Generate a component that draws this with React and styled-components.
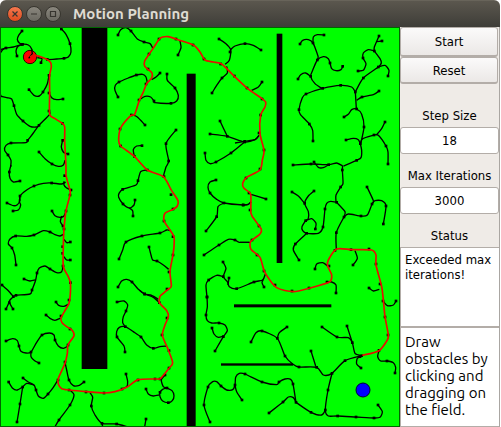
import React, { useState } from "react";
import styled, { createGlobalStyle } from "styled-components";

const GlobalStyle = createGlobalStyle`
  * { box-sizing: border-box; }
  body { margin: 0; background: #fff; }
`;

const Window = styled.main`
  margin-right: 1px;
  border-radius: 6px 6px 0 0;
  overflow: hidden;
  background: #efebe7;
  font: 13px/15px "DejaVu Sans Condensed", "DejaVu Sans", sans-serif;
  color: #000;
`;

const TitleBar = styled.header`
  display: flex;
  align-items: center;
  height: 27px;
  padding-left: 7px;
  gap: 3px;
  background: linear-gradient(#5b574e, #3e3d38);
  border-top: 1px solid #68645a;
`;

const WindowButton = styled.button`
  display: flex;
  width: 16px;
  height: 16px;
  padding: 0;
  align-items: center;
  justify-content: center;
  border: 1px solid #38362f;
  border-radius: 50%;
  background: ${(p) => (p.$close ? "linear-gradient(#f4784f, #df4b1e)" : "linear-gradient(#8a877e, #6b6961)")};
  color: #37352f;
  svg { display: block; }
`;

const Title = styled.h1`
  margin: 0 0 0 9px;
  font: bold 15px/20px "Ubuntu", "Noto Sans", sans-serif;
  color: #dfdbd2;
`;

const Body = styled.div`
  display: grid;
  grid-template-columns: minmax(0, 4fr) minmax(0, 1fr);
`;

const Field = styled.svg`
  display: block;
  width: 100%;
  background: #00ff00;
`;

const Panel = styled.aside`
  display: flex;
  flex-direction: column;
  border-right: 1px solid #aaa6a2;
`;

const Action = styled.button`
  height: ${(p) => p.$height};
  margin-right: 1px;
  padding: 0;
  border: 1px solid #b3ada8;
  border-bottom-width: 2px;
  border-radius: 3px;
  background: linear-gradient(#fbfafa, #ebe8e6);
  font: inherit;
  color: inherit;
`;

const Label = styled.label`
  padding: ${(p) => p.$top} 0 4px;
  text-align: center;
  white-space: nowrap;
`;

const NumberBox = styled.input`
  width: 100%;
  height: 27px;
  padding: 0;
  border: 1px solid #b3ada8;
  border-radius: 3px;
  background: #fff;
  font: inherit;
  color: inherit;
  text-align: center;
`;

const StatusBox = styled.textarea`
  display: block;
  width: 100%;
  height: 81px;
  padding: 4px 0 0 4px;
  border: 1px solid #b3ada8;
  border-bottom-width: 2px;
  border-right: 0;
  background: #fff;
  font: inherit;
  color: inherit;
  resize: none;
  overflow: hidden;
  outline: none;
`;

const Help = styled.p`
  flex: 1;
  margin: 0;
  padding: 5px 0 0 4px;
  border-left: 1px solid #b3ada8;
  border-bottom: 1px solid #b3ada8;
  background: #fff;
  font: 15px/17px "Ubuntu", "Noto Sans", sans-serif;
`;

/* The field is drawn on a 1200-unit grid, in regions. Each branch lists the
   points that its curve goes through; an asterisk marks a vertex of the tree. */
const regions = [
  {
    at: [0, 0],
    tree: [
      "66,12* 56,25 52,37 58,48 67,52*",
      "0,80 8,68 18,63* 40,60 67,52* 85,54 95,66 97,80 90,90",
      "0,68 18,63",
      "67,52 54,58 48,72 51,87*",
      "184,6* 198,22 210,50* 213,75 205,90 192,94* 170,96 145,98",
      "123,107* 126,95 112,92",
      "147,145* 142,170 129,195* 118,207 102,205 87,188*",
      "147,198* 155,212 170,218 189,216*",
      "0,207* 20,212 35,216 42,236* 50,262 69,282* 90,298 110,300 117,295*",
      "147,252* 149,262 117,295 100,318 83,340* 78,347 33,348* 18,355 14,370 24,384* 33,400 32,420",
      "117,375* 135,395 156,411* 175,418 190,414 195,400",
      "204,381* 197,379", "188,340* 184,360 190,375 197,379", "187,289*", "142,97*",
    ],
  },
  {
    at: [0, 399],
    tree: [
      "33,15 28,36* 30,55 40,66 60,63*",
      "194,47*", "213,90* 200,84 192,75 192,64",
      "197,66 185,72 155,69* 130,70 102,78* 80,90 60,108* 60,122 52,134 40,137 21,129*",
      "60,108 58,125 62,135 55,150 39,153*",
      "156,153* 165,167 180,172 192,168 198,153*",
      "185,168 181,185 189,198*",
      "192,222 180,228 165,224 150,216* 130,212 102,225* 80,229 47,228* 30,237 25,252 36,264* 44,285 48,315*",
      "211,246* 200,248 192,238", "211,300* 200,300 192,290",
      "189,318* 185,335 170,338 150,327* 135,318 118,324 111,339* 107,360 96,390* 90,402 48,406* 40,410",
      "72,357* 90,363 105,360", "6,375* 25,392 40,410*", "0,372 6,375",
      "192,207*", "188,260*", "188,280*", "210,105*", "211,368*",
    ],
  },
  {
    at: [0, 789],
    tree: [
      "40,20 30,30 25,42 18,57*", "28,38* 39,57*",
      "168,36* 176,46 192,49 207,42", "138,75* 150,85 165,91 183,84",
      "204,168 190,175 175,168 165,150* 162,135 148,129 126,135* 110,157 93,186* 78,189 62,183 57,168* 52,152 38,146 18,153*",
      "93,186 93,200 104,212 117,219*",
      "195,216* 200,240 207,270* 220,287 238,286 252,276*",
      "26,276* 38,295 52,300 68,291*", "68,291 60,342* 51,396*",
      "69,264* 85,276 102,285 108,300* 115,318 130,325 144,312* 160,292 174,270*",
      "68,291 80,280 102,285",
      "210,300 222,315 210,345* 177,390* 165,410",
      "270,308 278,322 274,348* 285,375 306,400* 350,402* 380,410", "306,400 308,410",
      "438,387* 434,410",
      "378,252* 383,275 380,290 366,297*",
      "351,36* 372,33 383,45 378,63* 370,80 368,98 376,110",
      "375,186* 372,168 351,141* 350,125 358,112 376,110* 400,125 423,141* 440,165 460,175* 480,170 500,168",
      "418,0 434,12* 460,22 478,38*",
      "438,297* 445,312 460,318 478,315",
      "495,255* 484,270 490,290 501,294* 516,302 522,317 517,332 505,338* 488,333 480,320 480,307* 488,298 501,294",
      "207,30*", "183,78*", "210,117*", "204,165*", "207,300*", "258,306*", "312,309*", "414,270*",
      "465,267*", "480,267*", "507,234*", "507,182*", "486,135*", "501,84*",
    ],
  },
  {
    at: [300, 0],
    tree: [
      "54,24* 62,8 78,2 93,12* 112,36 132,45* 150,50 158,63",
      "240,42 243,62 234,84*",
      "54,210* 45,190 46,175 57,165* 85,153 109,144* 128,142 138,150 142,168",
      "180,138* 168,150 155,158",
      "201,141* 202,160 225,183* 235,205 230,222 213,229* 165,227 162,222* 152,210 135,208 122,216",
      "98,264 112,270 135,294*", "126,356* 110,357 100,368 103,388*",
      "228,309* 198,350* 206,402* 198,420 190,448",
      "357,36* 375,48 392,68 388,100 375,112", "390,75* 392,68",
      "483,69* 460,55 435,50* 405,57 392,68",
      "380,118 382,138 366,153* 350,175 336,198*",
      "360,282* 382,328*", "330,321* 382,328 434,345* 465,338 477,325",
      "434,345 393,378* 348,405* 330,410 318,400 315,378*",
      "177,36*", "228,36*", "279,54*", "312,96*", "362,111*", "403,147*", "147,81*", "144,126*",
      "138,171*", "117,219*", "94,264*", "60,306*", "62,357*",
    ],
  },
  {
    at: [300, 399],
    tree: [
      "142,30* 122,35 114,62* 108,75 68,88* 57,100 56,112 69,132* 88,144 102,135 105,120*",
      "88,144 98,152 99,168*",
      "57,297* 68,270 78,246* 126,228* 180,219* 200,210 212,212",
      "147,261* 153,285 158,300 171,303* 190,315 206,328",
      "54,381* 65,363 80,358 96,366* 115,388 134,402* 155,406 175,418",
      "348,60* 330,66 324,82 330,99* 350,118 372,129* 430,135* 445,133 453,125",
      "372,129 354,140 350,170* 318,213*",
      "312,285* 357,255* 385,238 405,240* 418,247 450,247",
      "369,306* 378,325 370,350* 382,365 388,380 410,386* 462,366* 488,360 496,342",
      "387,354* 384,375", "370,350 350,346 326,360* 318,375 321,411*",
      "192,50*", "213,104*", "219,147*", "192,183*", "219,230*", "219,285*", "207,336*", "201,387*",
    ],
  },
  {
    at: [720, 0],
    tree: [
      "66,165* 55,180 35,190",
      "180,51* 188,40 205,38 219,48* 228,70 235,90", "219,48 220,30 232,23 252,24*",
      "308,118* 303,128 288,131 275,125 270,108* 265,95 250,89 232,99* 218,130 212,148* 225,170 245,184",
      "235,90 232,99", "174,156* 182,143 197,138 212,148",
      "219,342* 218,310 208,291* 181,262 177,248* 187,212 198,201* 248,184* 302,175* 335,180 346,195*",
      "346,195 370,153* 415,120* 424,108 420,95 403,72*", "417,27* 403,60 403,72", "426,42* 410,44",
      "403,72 385,68 370,78 369,93* 378,110 370,130 354,132*",
      "415,120 435,115 447,130 444,147*", "346,195 349,245", "417,192* 400,203 366,210* 350,220",
      "312,270* 325,262 335,248 350,246* 365,262 372,300* 362,350",
      "318,339* 340,334 355,338 361,350*", "361,350 368,335 402,324*", "435,285* 425,305 409,324",
      "402,324 415,325 438,357* 444,375 444,411*",
      "361,350 365,370 363,392 350,400* 310,417", "14,343*",
      "-15,348 14,343 45,338 57,325", "0,51 0,51",
      "21,183*", "66,216*", "62,264*", "57,318*", "72,369*",
    ],
  },
  {
    at: [720, 399],
    tree: [
      "159,15* 213,12* 266,14* 290,9 308,18", "222,6* 235,22 250,23 266,14",
      "308,18 307,30* 309,70 302,81* 288,105 288,125",
      "156,96* 175,108 194,130*", "222,93* 205,108 194,130 205,155 205,175 197,182*",
      "197,182 215,176 228,190 226,207*",
      "197,182 186,200 188,212 200,220* 235,220 249,201* 255,147* 260,130 272,124 290,127*",
      "290,127 315,155 312,171*", "312,171 325,162 363,168* 382,165 396,132*",
      "381,81* 400,122 396,132", "396,132 405,122 425,122 438,138* 430,192*",
      "312,171 289,218* 289,270", "200,220 166,252* 160,270 177,300*",
      "225,327* 230,312 248,308 263,318", "345,272 352,295 339,315*",
      "288,399* 288,375 275,366 260,366", "387,384* 400,393 418,388",
      "78,117* 33,103", "9,135* 25,133 33,125", "0,247 28,247",
      "72,381* 66,368 70,358",
      "60,27*", "18,54*", "27,99*", "30,150*", "57,198*", "36,240*", "51,285*", "72,333*", "105,375*",
      "156,393*", "207,384*", "261,366*", "267,318*", "285,271*", "333,269*", "387,267*", "408,312*", "420,372*",
    ],
  },
  {
    at: [600, 789],
    tree: [
      "21,21* 22,50 18,75* 22,92 35,99 57,99* 75,105 82,122 70,140* 45,183*", "36,114* 42,132 55,142 70,138",
      "153,156* 168,128 186,123* 232,145* 255,198* 278,222 297,231* 350,232* 370,255 396,250* 435,212* 485,197*",
      "261,111* 238,128 232,145", "333,183* 347,228",
      "366,111* 411,141* 445,143 457,158* 465,190 485,197", "441,108* 457,158",
      "485,197 472,205 470,222 483,234*", "588,33* 580,45 562,47 549,33*",
      "537,182 533,200 542,213 561,213* 580,218 587,232 585,249*",
      "396,250 384,300* 376,360* 385,378 413,378* 468,381* 522,384* 540,382 547,365 534,345*",
      "376,360 365,375 333,367* 288,337*",
      "207,369* 249,336* 265,321 280,323 288,337",
      "288,337 279,282* 272,268 255,267 237,276* 230,284 186,276* 135,252* 118,250 107,262 105,285* 98,299 80,300 63,288* 50,275 38,275 24,291* 12,345* 30,396*",
      "105,285 110,305 126,330*", "555,81*", "564,135*", "537,181*", "480,200*",
    ],
  },
];

const routes = [
  { at: [0, 0], line: "90,90 100,85 118,88 140,97 152,107 154,120 149,145 149,200 149,262 165,275 187,289 194,300 194,340 196,380 198,420 198,444 204,469 210,489 210,504 198,552 192,606 190,659 190,719 204,747 211,767 211,800 207,829 196,849 183,873 186,887 200,899 216,909 222,926 204,954 202,979 195,1009 175,1054 175,1071 185,1085 210,1089 260,1094 312,1098 345,1094 380,1081 415,1058 470,1056 482,1054 507,1024 518,1007 505,969 500,957 487,924 495,894 505,869 500,851 478,827 480,807" },
  { at: [300, 399], line: "180,408 204,388 214,378 210,335 218,290 222,260 222,230 210,210 192,182 195,160 220,148 232,138 234,122 215,92 190,50 142,30 103,-11 62,-42 56,-59 62,-96 92,-133 104,-137 118,-179 130,-204 140,-229 155,-246 156,-261 145,-271 134,-282 134,-297 145,-314 160,-336 178,-363 188,-369 205,-370 230,-362 280,-345 300,-324 315,-300 340,-294 365,-288 400,-254 442,-215 485,-185 497,-174 495,-159 482,-134 480,-79 492,-29 487,0" },
  { at: [720, 399], line: "67,0 60,30 20,52 8,70 12,85 32,103 33,160 48,185 64,208 60,222 32,245 33,268 60,292 75,338 110,383 160,395 210,384 268,366 275,345 263,318 265,300 290,267 335,269 395,270 408,285 408,315 425,380 430,420 435,470 445,525 442,540 417,572 367,586" },
];

const parse = (line) =>
  line.split(" ").map((item) => {
    const [x, y] = item.replace("*", "").split(",").map(Number);
    return { x, y, vertex: item.endsWith("*") };
  });

const curve = (points) =>
  points.slice(1).reduce((d, end, i) => {
    const start = points[i];
    const before = points[i - 1] || start;
    const after = points[i + 2] || end;
    const c1 = `${start.x + (end.x - before.x) / 8},${start.y + (end.y - before.y) / 8}`;
    const c2 = `${end.x - (after.x - start.x) / 8},${end.y - (after.y - start.y) / 8}`;
    return `${d} C${c1} ${c2} ${end.x},${end.y}`;
  }, `M${points[0].x},${points[0].y}`);

const shift = ([x, y]) => `translate(${x} ${y})`;

function PlanningField() {
  return (
    <Field viewBox="0 0 1200 1200" role="img" aria-label="Planning field">
      <g fill="none" stroke="#000" strokeWidth="4">
        {regions.map((region) => (
          <g key={region.at.join()} transform={shift(region.at)}>
            {region.tree.map((line) => <path key={line} d={curve(parse(line))} />)}
          </g>
        ))}
      </g>
      <g>
        <rect x="245" y="0" width="77" height="1026" />
        <rect x="560" y="140" width="27" height="1060" />
        <rect x="830" y="20" width="17" height="688" />
        <rect x="702" y="832" width="292" height="9" />
        <rect x="663" y="1009" width="216" height="7" />
      </g>
      <circle cx="90" cy="90" r="20" fill="#f00" stroke="#300" strokeWidth="3" />
      <circle cx="1089" cy="1089" r="21" fill="#00f" stroke="#003" strokeWidth="3" />
      {regions.map((region) => (
        <g key={region.at.join()} transform={shift(region.at)}>
          {region.tree.flatMap(parse).filter((p) => p.vertex).map((p, i) => (
            <rect key={i} x={p.x - 4} y={p.y - 4} width="8" height="8" />
          ))}
        </g>
      ))}
      <path d="M86,94 L97,80 L95,68" fill="none" stroke="#000" strokeWidth="4" />
      <g fill="none" stroke="#e60f00" strokeWidth="5">
        {routes.map((route) => (
          <path key={route.line} transform={shift(route.at)} d={curve(parse(route.line))} />
        ))}
      </g>
      <rect x="1.5" y="1.5" width="1197" height="1197" fill="none" stroke="#006400" strokeWidth="3" />
    </Field>
  );
}

const Glyph = ({ d }) => (
  <svg width="8" height="8" viewBox="0 0 8 8" fill="none" stroke="currentColor" strokeWidth="1.2" aria-hidden="true">
    <path d={d} />
  </svg>
);

export default function App() {
  const [step, setStep] = useState("18");
  const [limit, setLimit] = useState("3000");
  return (
    <Window>
      <GlobalStyle />
      <TitleBar>
        <WindowButton $close aria-label="Close"><Glyph d="M1.5 1.5 6.5 6.5M6.5 1.5 1.5 6.5" /></WindowButton>
        <WindowButton aria-label="Minimize"><Glyph d="M1 4H7" /></WindowButton>
        <WindowButton aria-label="Maximize"><Glyph d="M1.5 1.5H6.5V6.5H1.5Z" /></WindowButton>
        <Title>Motion Planning</Title>
      </TitleBar>
      <Body>
        <PlanningField />
        <Panel>
          <Action $height="30px">Start</Action>
          <Action $height="27px">Reset</Action>
          <Label $top="24px" htmlFor="step">Step Size</Label>
          <NumberBox id="step" value={step} onChange={(e) => setStep(e.target.value)} />
          <Label $top="14px" htmlFor="limit">Max Iterations</Label>
          <NumberBox id="limit" value={limit} onChange={(e) => setLimit(e.target.value)} />
          <Label $top="14px" htmlFor="status">Status</Label>
          <StatusBox id="status" readOnly value="Exceeded max iterations!" />
          <Help>Draw obstacles by clicking and dragging on the field.</Help>
        </Panel>
      </Body>
    </Window>
  );
}
